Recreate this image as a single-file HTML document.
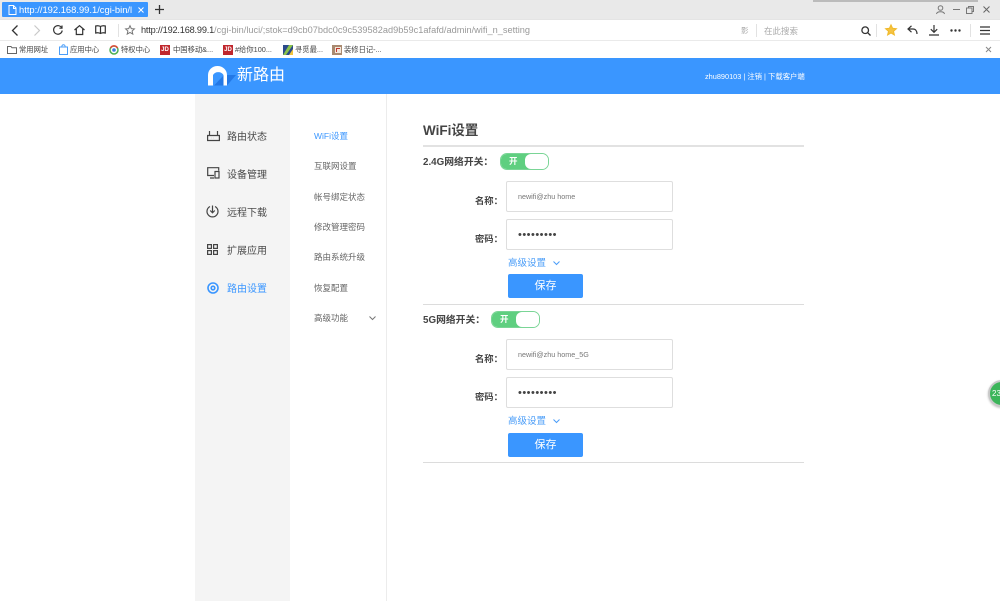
<!DOCTYPE html>
<html><head><meta charset="utf-8"><style>
*{box-sizing:border-box}
html,body{margin:0;padding:0;width:1000px;height:601px;overflow:hidden;background:#fff;font-family:"Liberation Sans","Noto Sans CJK SC",sans-serif}
#p{position:absolute;left:0;top:0;width:1000px;height:601px;filter:blur(.25px)}
.a{position:absolute;white-space:nowrap}
svg{position:absolute;overflow:visible}
.bm{font-size:7.300px;color:#444;line-height:12px;top:44px}
.side{font-size:10px;color:#4a4a4a;left:227px;line-height:14px}
.sub{font-size:8.500px;color:#666;left:314px;line-height:12px}
.lbl{font-size:9.800px;color:#444;font-weight:bold;line-height:14px}
.lb2{font-size:9.300px;color:#444;font-weight:bold;line-height:14px;left:475px}
.box{left:506px;width:167px;height:31px;border:1px solid #dedede;border-radius:2px;background:#fff}
.val{font-size:7.200px;color:#777;left:518px;line-height:12px}
.dots{font-size:11px;letter-spacing:.48px;color:#444;left:518px;line-height:12px}
.adv{font-size:9.500px;color:#4a9df8;left:508px;line-height:14px}
.btn{left:508px;width:75px;height:24px;background:#3a96ff;border-radius:2px;color:#fff;font-size:11px;text-align:center;line-height:24px}
.hr{left:423px;width:381px;height:1px;background:#dcdcdc}
.sw{width:49px;height:17px;border-radius:7px;border:1px solid #7ad596;background:#fff;overflow:hidden}
.sw i{position:absolute;left:0;top:0;width:30px;height:15px;background:#5fcf80}
.sw b{position:absolute;left:8px;top:1px;color:#fff;font-size:8.500px;line-height:13px}
.sw u{position:absolute;left:24px;top:0;width:24px;height:15px;background:#fff;border-radius:6px}
</style></head><body><div id="p">
<div class="a" style="left:0;top:0;width:1000px;height:19px;background:#e9e9e9"></div>
<div class="a" style="left:813px;top:0;width:165px;height:2px;background:#bbb"></div>
<div class="a" style="left:2px;top:2px;width:146px;height:15px;background:#3a96ff;border-radius:1px"></div>
<svg style="left:8px;top:5px" width="9" height="10" fill="none" stroke="#fff" stroke-width="1"><path d="M1 .5h4.500l2.500 2.500v6.500h-7z M5.500 .5v3h2.500"/></svg>
<div class="a" style="left:19px;top:3px;width:113px;overflow:hidden;color:#fff;font-size:9.400px;line-height:14px">http://192.168.99.1/cgi-bin/l</div>
<svg style="left:138px;top:7px" width="6" height="6" stroke="#fff" stroke-width="1"><path d="M.5 .5l5 5M5.500 .5l-5 5"/></svg>
<svg style="left:155px;top:5px" width="9" height="9" stroke="#333" stroke-width="1.300"><path d="M4.500 0v9M0 4.500h9"/></svg>
<svg style="left:936px;top:5px" width="9" height="9" fill="none" stroke="#777"><circle cx="4.500" cy="3" r="2.300"/><path d="M.5 9c.5-3 7.500-3 8 0"/></svg>
<svg style="left:953px;top:9px" width="7" height="1"><path d="M0 .5h7" stroke="#777"/></svg>
<svg style="left:966px;top:6px" width="8" height="8" fill="none" stroke="#777"><rect x=".5" y="2" width="5.500" height="5.500"/><path d="M2.500 2V.5h5v5H6"/></svg>
<svg style="left:983px;top:6px" width="7" height="7" stroke="#666"><path d="M.5 .5l6 6M6.500 .5l-6 6"/></svg>

<div class="a" style="left:0;top:19px;width:1000px;height:22px;background:#fff;border-top:1px solid #e4e4e4;border-bottom:1px solid #eaeaea"></div>
<svg style="left:11px;top:25px" width="8" height="11" fill="none" stroke="#333" stroke-width="1.300"><path d="M6.500 .5l-5 5 5 5"/></svg>
<svg style="left:33px;top:25px" width="8" height="11" fill="none" stroke="#c8c8c8" stroke-width="1.200"><path d="M1.500 .5l5 5-5 5"/></svg>
<svg style="left:53px;top:25px" width="10" height="10" fill="none" stroke="#333" stroke-width="1.200"><path d="M8.800 3a4.300 4.300 0 1 0 .4 2.500M9 .5V3.200H6.400"/></svg>
<svg style="left:74px;top:25px" width="11" height="10" fill="none" stroke="#333" stroke-width="1.200"><path d="M.5 5L5.500 .7 10.500 5M2.300 4v5.500h6.400V4"/></svg>
<svg style="left:95px;top:25px" width="11" height="10" fill="none" stroke="#333" stroke-width="1.200"><path d="M5.500 1.500C4 .7 2 .7 .7 1v7c1.300-.3 3.300-.3 4.800.5 1.500-.8 3.500-.8 4.800-.5V1C9 .7 7 .7 5.500 1.500zV8.500"/></svg>
<div class="a" style="left:118px;top:24px;width:1px;height:13px;background:#e2e2e2"></div>
<svg style="left:125px;top:25px" width="10" height="10" fill="none" stroke="#777"><path d="M5 .7l1.300 2.900 3.100.3-2.300 2.100.7 3.100L5 7.500 2.200 9.100l.7-3.100L.6 3.900l3.100-.3z"/></svg>
<div class="a" style="left:141px;top:24px;font-size:9.200px;line-height:13px;color:#999;width:590px;overflow:hidden;letter-spacing:.015px"><span style="color:#333;letter-spacing:-.19px">http://192.168.99.1</span>/cgi-bin/luci/;stok=d9cb07bdc0c9c539582ad9b59c1afafd/admin/wifi_n_setting</div>
<div class="a" style="left:741px;top:26px;width:8px;height:9px;font-size:7.500px;line-height:9px;color:#aaa">影</div>
<div class="a" style="left:756px;top:24px;width:1px;height:13px;background:#e2e2e2"></div>
<div class="a" style="left:764px;top:24px;font-size:8.500px;line-height:14px;color:#aaa">在此搜索</div>
<svg style="left:861px;top:26px" width="10" height="10" fill="none" stroke="#333" stroke-width="1.300"><circle cx="4.200" cy="4.200" r="3.300"/><path d="M6.700 6.700L9.500 9.500"/></svg>
<div class="a" style="left:876px;top:24px;width:1px;height:13px;background:#e2e2e2"></div>
<svg style="left:885px;top:24px" width="12" height="12" fill="#f5c342" stroke="#f0b92a"><path d="M6 .8l1.600 3.500 3.800.4-2.900 2.500.9 3.800L6 8.900 2.600 11l.9-3.800L.6 4.700l3.800-.4z"/></svg>
<svg style="left:907px;top:25px" width="11" height="10" fill="none" stroke="#333" stroke-width="1.200"><path d="M4.500 .8L1 4l3.500 3.200M1 4h5c2.500 0 4 2 4 5"/></svg>
<svg style="left:929px;top:25px" width="10" height="11" fill="none" stroke="#333" stroke-width="1.200"><path d="M5 0v7M1.800 4.200L5 7.300l3.200-3.100M0 10h10"/></svg>
<svg style="left:950px;top:29px" width="11" height="3" fill="#333"><circle cx="1.500" cy="1.500" r="1.200"/><circle cx="5.500" cy="1.500" r="1.200"/><circle cx="9.500" cy="1.500" r="1.200"/></svg>
<div class="a" style="left:970px;top:24px;width:1px;height:13px;background:#e2e2e2"></div>
<svg style="left:980px;top:26px" width="10" height="9" stroke="#333" stroke-width="1.200"><path d="M0 1h10M0 4.500h10M0 8h10"/></svg>

<div class="a" style="left:0;top:41px;width:1000px;height:17px;background:#fff"></div>
<svg style="left:7px;top:46px" width="10" height="8" fill="none" stroke="#666"><path d="M.5 .5h3.500l1 1.200h4.500v5.800H.5z"/></svg>
<div class="a bm" style="left:19px">常用网址</div>
<svg style="left:59px;top:44px" width="9" height="11" fill="#fff" stroke="#4a9df8"><path d="M.5 3h8v7.500h-8zM2.800 3c0-3 3.400-3 3.400 0"/></svg>
<div class="a bm" style="left:70px">应用中心</div>
<svg style="left:109px;top:45px" width="10" height="10"><circle cx="5" cy="5" r="4" fill="none" stroke="#4caf50" stroke-width="1.500"/><path d="M1.500 3A4 4 0 0 1 8.500 3" fill="none" stroke="#e04a3a" stroke-width="1.500"/><circle cx="5" cy="5" r="1.800" fill="#3a7fe0"/></svg>
<div class="a bm" style="left:121px">特权中心</div>
<div class="a" style="left:160px;top:45px;width:10px;height:10px;background:#c0272d;color:#fff;font-size:6px;line-height:10px;text-align:center;font-weight:bold">JD</div>
<div class="a bm" style="left:173px">中国移动&amp;...</div>
<div class="a" style="left:223px;top:45px;width:10px;height:10px;background:#c0272d;color:#fff;font-size:6px;line-height:10px;text-align:center;font-weight:bold">JD</div>
<div class="a bm" style="left:235px">#给你100...</div>
<svg style="left:283px;top:45px" width="10" height="10"><rect width="10" height="10" fill="#2b4a8a"/><path d="M0 10L6 0h4L3 10z" fill="#8bc34a"/><path d="M6 10L10 4v6z" fill="#f2c53d"/></svg>
<div class="a bm" style="left:295px">寻觅最...</div>
<svg style="left:332px;top:45px" width="10" height="10"><rect width="10" height="10" fill="#a98a70"/><rect x="3" y="2" width="6" height="6" fill="#f3e6da"/><path d="M4 3h4v1H5v3H4z" fill="#c0392b"/></svg>
<div class="a bm" style="left:344px">装修日记-...</div>
<svg style="left:985px;top:46px" width="7" height="7" stroke="#888"><path d="M1 1l5 5M6 1L1 6"/></svg>

<div class="a" style="left:0;top:58px;width:1000px;height:36px;background:#3a96ff"></div>
<svg style="left:207px;top:65px" width="30" height="22"><path d="M7 20.500L17 10h12l-9 10.500z" fill="#2378e6"/><path d="M1 20.500V10a9.500 9 0 0 1 19 0v10.500h-3.500V10a6 5.500 0 0 0-10.500 0v10.500z" fill="#fff"/></svg>
<div class="a" style="left:237px;top:66px;font-size:16px;line-height:20px;color:#fff">新路由</div>
<div class="a" style="left:705px;top:71px;font-size:7.350px;line-height:11px;color:#fff">zhu890103 | 注销 | 下载客户端</div>

<div class="a" style="left:195px;top:94px;width:95px;height:507px;background:#f4f4f4"></div>
<div class="a" style="left:386px;top:94px;width:1px;height:507px;background:#ececec"></div>

<svg style="left:207px;top:130px" width="13" height="12" fill="none" stroke="#444" stroke-width="1.200"><path d="M.6 5.500h11.800v5H.6zM2.500 1v4.500M10.500 1v4.500M4 8h.1M6 8h.1"/></svg>
<div class="a side" style="top:131px">路由状态</div>
<svg style="left:207px;top:167px" width="13" height="12" fill="none" stroke="#444" stroke-width="1.200"><path d="M7 8.500H.7V.7h11v3M3 11h4"/><rect x="8" y="4.500" width="4" height="6.500"/></svg>
<div class="a side" style="top:169px">设备管理</div>
<svg style="left:206px;top:205px" width="13" height="13" fill="none" stroke="#444" stroke-width="1.200"><path d="M4 1.500a5.500 5.500 0 1 0 5 0"/><path d="M6.500 .5v7M4.200 5.500l2.300 2.300 2.300-2.300"/></svg>
<div class="a side" style="top:207px">远程下载</div>
<svg style="left:207px;top:244px" width="11" height="11" fill="none" stroke="#444" stroke-width="1.200"><rect x=".6" y=".6" width="3.800" height="3.800"/><rect x="6.600" y=".6" width="3.800" height="3.800"/><rect x=".6" y="6.600" width="3.800" height="3.800"/><rect x="6.600" y="6.600" width="3.800" height="3.800"/></svg>
<div class="a side" style="top:245px">扩展应用</div>
<svg style="left:207px;top:282px" width="12" height="12" fill="none" stroke="#3a96ff" stroke-width="1.600"><circle cx="6" cy="6" r="5"/><circle cx="6" cy="6" r="1.800"/></svg>
<div class="a side" style="top:283px;color:#3a96ff">路由设置</div>

<div class="a sub" style="top:130px;color:#3a96ff">WiFi设置</div>
<div class="a sub" style="top:160px">互联网设置</div>
<div class="a sub" style="top:191px">帐号绑定状态</div>
<div class="a sub" style="top:221px">修改管理密码</div>
<div class="a sub" style="top:251px">路由系统升级</div>
<div class="a sub" style="top:282px">恢复配置</div>
<div class="a sub" style="top:312px">高级功能</div>
<svg style="left:369px;top:316px" width="7" height="4" fill="none" stroke="#777"><path d="M.5 .5l3 3 3-3"/></svg>

<div class="a" style="left:423px;top:122px;font-size:13.500px;line-height:18px;font-weight:bold;color:#444">WiFi设置</div>
<div class="a" style="left:423px;top:145px;width:381px;height:2px;background:#e2e2e2"></div>

<div class="a lbl" style="left:423px;top:156px">2.4G网络开关：</div>
<div class="a sw" style="left:500px;top:153px"><i></i><b>开</b><u></u></div>
<div class="a lb2" style="top:194px">名称：</div>
<div class="a box" style="top:181px"></div>
<div class="a val" style="top:191px">newifi@zhu home</div>
<div class="a lb2" style="top:232px">密码：</div>
<div class="a box" style="top:219px"></div>
<div class="a dots" style="top:229px">•••••••••</div>
<div class="a adv" style="top:257px">高级设置</div>
<svg style="left:553px;top:261px" width="7" height="4" fill="none" stroke="#4a9df8"><path d="M.5 .5l3 3 3-3"/></svg>
<div class="a btn" style="top:274px">保存</div>
<div class="a hr" style="top:304px"></div>

<div class="a lbl" style="left:423px;top:314px">5G网络开关：</div>
<div class="a sw" style="left:491px;top:311px"><i></i><b>开</b><u></u></div>
<div class="a lb2" style="top:352px">名称：</div>
<div class="a box" style="top:339px"></div>
<div class="a val" style="top:349px">newifi@zhu home_5G</div>
<div class="a lb2" style="top:390px">密码：</div>
<div class="a box" style="top:377px"></div>
<div class="a dots" style="top:387px">•••••••••</div>
<div class="a adv" style="top:415px">高级设置</div>
<svg style="left:553px;top:419px" width="7" height="4" fill="none" stroke="#4a9df8"><path d="M.5 .5l3 3 3-3"/></svg>
<div class="a btn" style="top:433px">保存</div>
<div class="a hr" style="top:462px"></div>

<div class="a" style="left:988px;top:380px;width:27px;height:27px;border-radius:50%;background:#3cb55a;border:2px solid #c9c9c9;box-shadow:0 1px 2px rgba(0,0,0,.25);color:#fff;font-size:8px;line-height:23px;padding-left:2px">23</div>
</div></body></html>
